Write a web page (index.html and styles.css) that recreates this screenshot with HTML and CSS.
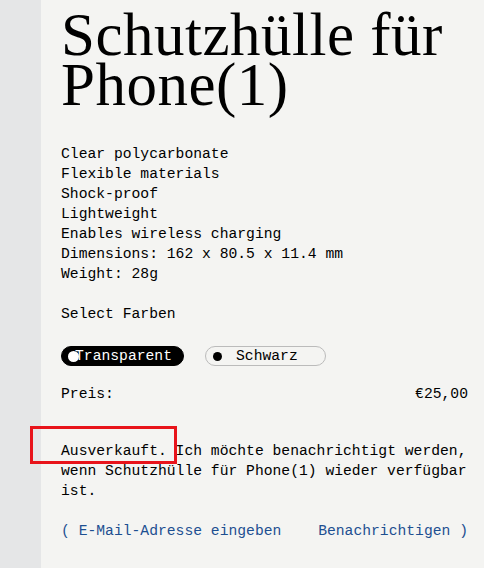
FILE: index.html
```html
<!DOCTYPE html>
<html lang="de">
<head>
<meta charset="utf-8">
<link rel="stylesheet" href="styles.css">
</head>
<body>
<div class="page">
  <aside class="rail"></aside>
  <main class="content">
    <h1 class="title">Schutzhülle für Phone(1)</h1>
    <ul class="specs">
      <li>Clear polycarbonate</li>
      <li>Flexible materials</li>
      <li>Shock-proof</li>
      <li>Lightweight</li>
      <li>Enables wireless charging</li>
      <li>Dimensions: 162 x 80.5 x 11.4 mm</li>
      <li>Weight: 28g</li>
    </ul>
    <p class="label">Select Farben</p>
    <div class="swatches">
      <button class="pill active"><span class="dot"></span>Transparent</button>
      <button class="pill"><span class="dot"></span>Schwarz</button>
    </div>
    <div class="price"><span>Preis:</span><span>€25,00</span></div>
    <div class="notice">
      <p><span class="sold">Ausverkauft.</span> Ich möchte benachrichtigt werden, wenn Schutzhülle für Phone(1) wieder verfügbar ist.</p>
      <span class="mark"></span>
    </div>
    <div class="notify"><span>( E-Mail-Adresse eingeben</span><span>Benachrichtigen )</span></div>
  </main>
</div>
</body>
</html>
```
FILE: styles.css
```css
html, body { margin: 0; padding: 0; }
body { background: #f4f4f2; color: #000; font-family: "Liberation Mono", monospace; font-size: 14.7px; line-height: 20px; }
.page { display: flex; min-height: 568px; }
.rail { width: 41px; flex: none; background: #e5e6e7; }
.content { flex: 1; padding: 0 16px 0 20px; position: relative; }
.title { font-family: "Liberation Serif", serif; font-weight: normal; font-size: 61px; line-height: 50px; margin: 0; padding-top: 10px; letter-spacing: 0.5px; }
.specs { list-style: none; margin: 34px 0 0; padding: 0; }
.label { margin: 20px 0 0; }
.swatches { display: flex; gap: 21px; margin-top: 22px; }
.pill { font: inherit; display: flex; align-items: center; height: 20px; padding: 0 10px 0 4px; border-radius: 10px; border: 1px solid #bbb; background: transparent; color: #000; width: 121px; cursor: pointer; }
.pill .dot { width: 9px; height: 9px; border-radius: 50%; background: #000; margin-right: 14px; margin-left: 3px; }
.pill.active { background: #000; color: #fff; border-color: #000; padding-left: 4px; width: 123px; }
.pill.active .dot { background: #fff; width: 11px; height: 11px; margin-left: 2px; margin-right: -4px; }
.price { display: flex; justify-content: space-between; margin-top: 18px; }
.notice { margin-top: 37px; position: relative; }
.notice p { margin: 0; }
.mark { position: absolute; left: -31px; top: -15px; width: 141px; height: 32px; border: 3px solid #e8141b; }
.notify { display: flex; justify-content: space-between; margin-top: 20px; color: #1d4f91; }
```
